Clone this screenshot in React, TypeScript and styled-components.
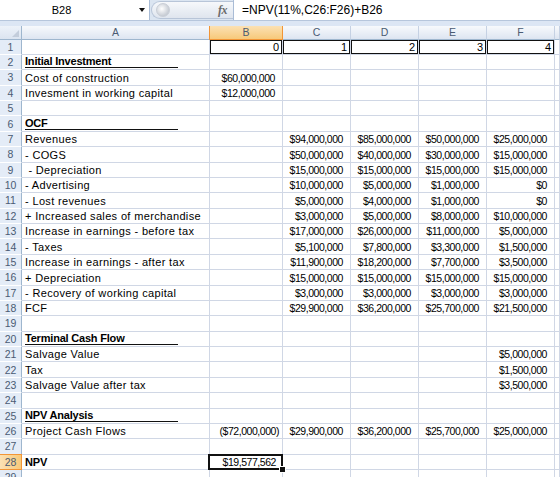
import styled, { createGlobalStyle } from "styled-components"

const GlobalStyle = createGlobalStyle`
  html, body {
    margin: 0;
    padding: 0;
    background: #ffffff;
    font-family: "Liberation Sans", Arial, sans-serif;
  }
`

type Row = {
  label?: string
  heading?: boolean
  bold?: boolean
  values?: (string | null)[]
}

const rows: Row[] = [
  { values: ["0", "1", "2", "3", "4"] },
  { label: "Initial Investment", heading: true },
  { label: "Cost of construction", values: ["$60,000,000"] },
  { label: "Invesment in working capital", values: ["$12,000,000"] },
  {},
  { label: "OCF", heading: true },
  { label: "Revenues", values: [null, "$94,000,000", "$85,000,000", "$50,000,000", "$25,000,000"] },
  { label: "- COGS", values: [null, "$50,000,000", "$40,000,000", "$30,000,000", "$15,000,000"] },
  { label: "\u00a0- Depreciation", values: [null, "$15,000,000", "$15,000,000", "$15,000,000", "$15,000,000"] },
  { label: "- Advertising", values: [null, "$10,000,000", "$5,000,000", "$1,000,000", "$0"] },
  { label: "- Lost revenues", values: [null, "$5,000,000", "$4,000,000", "$1,000,000", "$0"] },
  { label: "+ Increased sales of merchandise", values: [null, "$3,000,000", "$5,000,000", "$8,000,000", "$10,000,000"] },
  { label: "Increase in earnings - before tax", values: [null, "$17,000,000", "$26,000,000", "$11,000,000", "$5,000,000"] },
  { label: "- Taxes", values: [null, "$5,100,000", "$7,800,000", "$3,300,000", "$1,500,000"] },
  { label: "Increase in earnings - after tax", values: [null, "$11,900,000", "$18,200,000", "$7,700,000", "$3,500,000"] },
  { label: "+ Depreciation", values: [null, "$15,000,000", "$15,000,000", "$15,000,000", "$15,000,000"] },
  { label: "- Recovery of working capital", values: [null, "$3,000,000", "$3,000,000", "$3,000,000", "$3,000,000"] },
  { label: "FCF", values: [null, "$29,900,000", "$36,200,000", "$25,700,000", "$21,500,000"] },
  {},
  { label: "Terminal Cash Flow", heading: true },
  { label: "Salvage Value", values: [null, null, null, null, "$5,000,000"] },
  { label: "Tax", values: [null, null, null, null, "$1,500,000"] },
  { label: "Salvage Value after tax", values: [null, null, null, null, "$3,500,000"] },
  {},
  { label: "NPV Analysis", heading: true },
  { label: "Project Cash Flows", values: ["($72,000,000)", "$29,900,000", "$36,200,000", "$25,700,000", "$25,000,000"] },
  {},
  { label: "NPV", bold: true, values: ["$19,577,562"] },
  {},
]

const columns = ["A", "B", "C", "D", "E", "F", ""]
const ACTIVE_ROW = 28
const ACTIVE_COL = "B"

function App (): JSX.Element {
  return (
    <>
      <GlobalStyle />
      <Window>
        <FormulaBar>
          <NameBox>
            <NameText>B28</NameText>
            <DropArrow />
          </NameBox>
          <FxPill>
            <Grip />
            <Fx>fx</Fx>
          </FxPill>
          <FormulaInput>=NPV(11%,C26:F26)+B26</FormulaInput>
        </FormulaBar>
        <Sheet>
          <Corner />
          {columns.map(col => (
            <ColHeader key={col || "G"} $active={col === ACTIVE_COL}>{col}</ColHeader>
          ))}
          {rows.map((row, i) => {
            const n = i + 1
            return [
              <RowHeader key={`h${n}`} $active={n === ACTIVE_ROW}>{n}</RowHeader>,
              <LabelCell key={`a${n}`} $bold={row.heading === true || row.bold === true}>
                {row.heading === true ? <Heading>{row.label}</Heading> : row.label}
              </LabelCell>,
              ...[0, 1, 2, 3, 4].map(c => {
                const v = row.values?.[c] ?? null
                const isInt = n === 1
                const isActive = n === ACTIVE_ROW && c === 0
                const isNeg = v?.startsWith("(") === true
                if (isActive) {
                  return (
                    <ActiveCell key={`v${n}-${c}`}>
                      {v}
                      <FillHandle />
                    </ActiveCell>
                  )
                }
                if (isInt) {
                  return <IndexCell key={`v${n}-${c}`}>{v}</IndexCell>
                }
                return (
                  <ValueCell key={`v${n}-${c}`} $pad={isNeg ? 3 : 7}>
                    {v}
                  </ValueCell>
                )
              }),
              <EdgeCell key={`g${n}`} />,
            ]
          })}
        </Sheet>
      </Window>
    </>
  )
}

const Window = styled.div`
  width: 560px;
  height: 477px;
  overflow: hidden;
  background: #dce6f4;
`

const FormulaBar = styled.div`
  display: flex;
  height: 21px;
  background: #dbe5f1;
  border-bottom: 1px solid #b6c6dc;
  box-sizing: border-box;
`

const NameBox = styled.div`
  flex: 0 0 150px;
  display: flex;
  align-items: center;
  background: #ffffff;
  border-right: 1px solid #a9bcd6;
  box-sizing: border-box;
`

const NameText = styled.div`
  flex: 1;
  text-align: center;
  font-size: 11px;
  color: #000;
  padding-right: 16px;
`

const DropArrow = styled.div`
  width: 0;
  height: 0;
  margin-right: 4px;
  border-left: 3.5px solid transparent;
  border-right: 3.5px solid transparent;
  border-top: 4px solid #111;
`

const FxPill = styled.div`
  flex: 0 0 82px;
  margin: 1px 0 1px 1px;
  display: flex;
  align-items: center;
  justify-content: space-between;
  padding: 0 6px 0 4px;
  box-sizing: border-box;
  border-radius: 9px 0 0 9px;
  background: linear-gradient(#f6f8fb, #dfe5ee);
  border: 1px solid #b8c5d8;
  border-right: none;
`

const Grip = styled.div`
  width: 12px;
  height: 12px;
  border-radius: 50%;
  background: radial-gradient(circle at 40% 40%, #ffffff, #c7ccd4 70%);
  border: 1px solid #c9ced6;
`

const Fx = styled.span`
  font-family: "Liberation Serif", serif;
  font-style: italic;
  font-weight: bold;
  font-size: 12px;
  color: #6c6c6c;
  letter-spacing: -0.5px;
`

const FormulaInput = styled.div`
  flex: 1;
  display: flex;
  align-items: center;
  background: #ffffff;
  border-left: 1px solid #a9bcd6;
  padding-left: 8px;
  font-size: 12px;
  color: #000;
`

const Sheet = styled.div`
  margin-top: 5px;
  display: grid;
  grid-template-columns: 22px 188px 73px 68px 68px 68px 68px 1fr;
  grid-template-rows: 13.5px repeat(29, 15.385px);
  background: #ffffff;
`

const headerBase = `
  display: flex;
  align-items: center;
  justify-content: center;
  font-size: 10.5px;
  color: #4a5b73;
  box-sizing: border-box;
  overflow: hidden;
`

const Corner = styled.div`
  ${headerBase}
  position: relative;
  background: linear-gradient(#edf2f9, #dbe4f0);
  border-right: 1px solid #9eb6ce;
  border-bottom: 1px solid #9eb6ce;

  &::after {
    content: "";
    position: absolute;
    right: 2px;
    bottom: 2px;
    border-left: 7px solid transparent;
    border-bottom: 7px solid #c3cddb;
  }
`

const ColHeader = styled.div<{ $active: boolean }>`
  ${headerBase}
  background: ${p => p.$active ? "linear-gradient(#fbe1b4, #f7c97a)" : "linear-gradient(#f7f9fc, #dde5f1)"};
  border-right: 1px solid ${p => p.$active ? "#f29536" : "#c5d1e3"};
  border-bottom: 1px solid ${p => p.$active ? "#f29536" : "#9eb6ce"};
  ${p => p.$active ? "border-left: 1px solid #f29536; margin-left: -1px;" : ""}
`

const RowHeader = styled.div<{ $active: boolean }>`
  ${headerBase}
  background: ${p => p.$active ? "linear-gradient(90deg, #fbe1b4, #f7c97a)" : "#e4ecf7"};
  border-right: 1px solid ${p => p.$active ? "#f29536" : "#9eb6ce"};
  border-bottom: 1px solid ${p => p.$active ? "#f29536" : "#ffffff"};
  ${p => p.$active ? "border-top: 1px solid #f29536; margin-top: -1px;" : ""}
`

const cellBase = `
  display: flex;
  align-items: flex-end;
  padding-bottom: 1px;
  box-sizing: border-box;
  border-right: 1px solid #d0d7e5;
  border-bottom: 1px solid #d0d7e5;
  color: #000;
  white-space: nowrap;
  position: relative;
`

const LabelCell = styled.div<{ $bold: boolean }>`
  ${cellBase}
  padding-left: 3px;
  font-size: 11px;
  font-weight: ${p => p.$bold ? "bold" : "normal"};
  letter-spacing: ${p => p.$bold ? "-0.2px" : "0.35px"};
`

const Heading = styled.span`
  display: inline-block;
  width: 153px;
  line-height: 11px;
  border-bottom: 1px solid #111;
`

const ValueCell = styled.div<{ $pad: number }>`
  ${cellBase}
  justify-content: flex-end;
  padding-right: ${p => p.$pad}px;
  font-size: 10.5px;
  letter-spacing: -0.45px;
`

const IndexCell = styled.div`
  ${cellBase}
  justify-content: flex-end;
  padding-right: 3px;
  font-size: 11px;
  box-shadow: inset 0 0 0 1px #111;
`

const ActiveCell = styled.div`
  ${cellBase}
  align-items: center;
  justify-content: flex-end;
  padding: 0 6px 0 0;
  font-size: 10.5px;
  letter-spacing: -0.45px;
  z-index: 1;

  &::before {
    content: "";
    position: absolute;
    inset: -1px -1px -1px -2px;
    border: 2px solid #111;
    pointer-events: none;
  }
`

const FillHandle = styled.span`
  position: absolute;
  right: -4px;
  bottom: -4px;
  width: 5px;
  height: 5px;
  background: #111;
  border: 1px solid #ffffff;
  z-index: 1;
`

const EdgeCell = styled.div`
  ${cellBase}
`

export default App
